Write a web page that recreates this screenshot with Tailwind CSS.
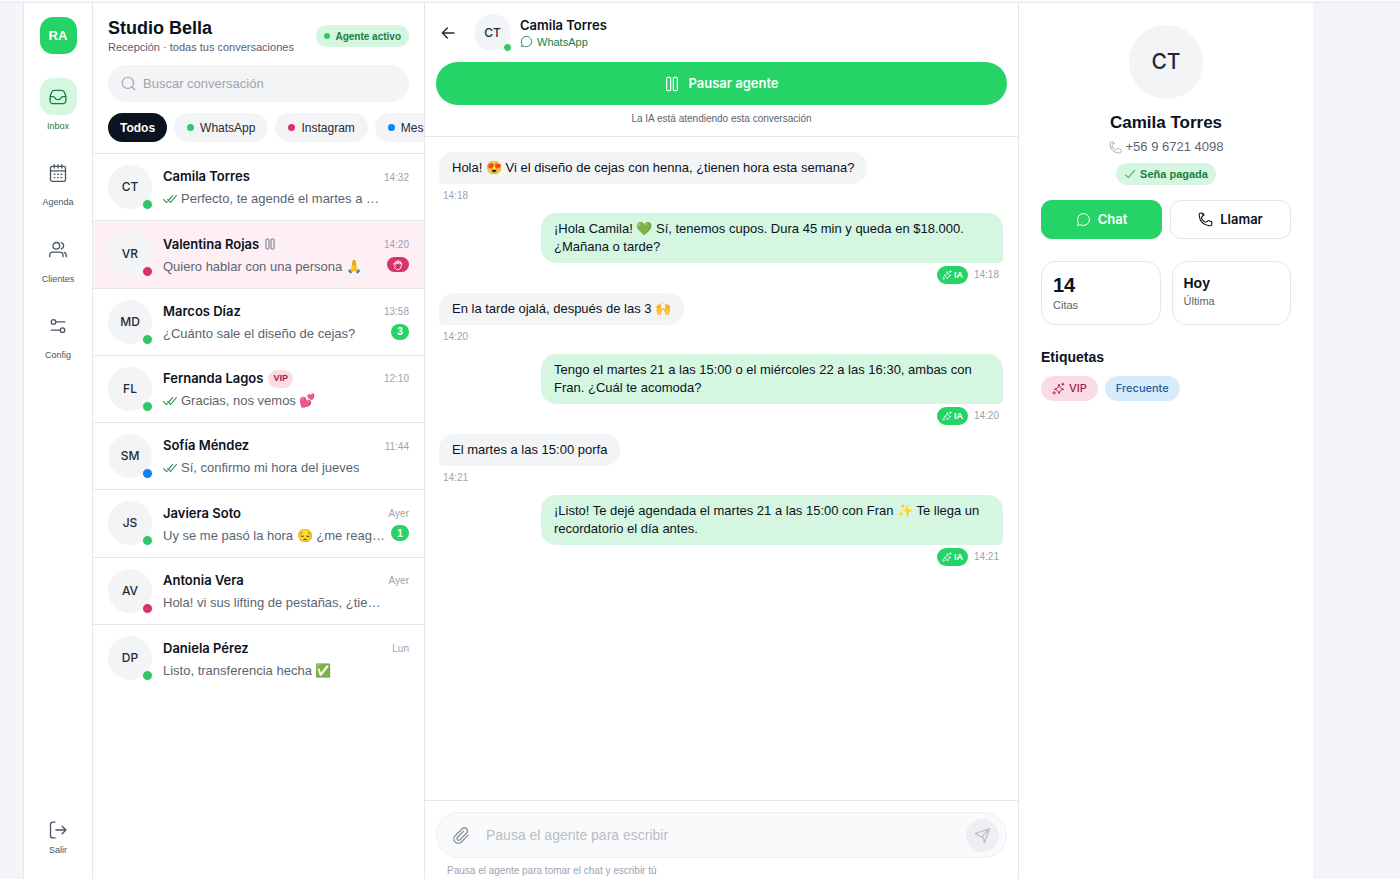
<!DOCTYPE html>
<html lang="es">
<head>
<meta charset="utf-8">
<meta name="viewport" content="width=device-width, initial-scale=1">
<title>Studio Bella · Recepción</title>
<script src="https://cdn.jsdelivr.net/npm/@tailwindcss/browser@4"></script>
</head>
<body class="flex h-screen flex-col overflow-hidden bg-[#f3f5f8] font-['Liberation_Sans',sans-serif] text-[13px] text-[#0b1220]">
<svg class="hidden" aria-hidden="true">
  <defs>
    <symbol id="i-dbl" viewBox="0 0 24 24"><path stroke-linecap="round" stroke-linejoin="round" d="M1 13 L6 18 L7.500 16.500 M16.500 6 L10.500 13 M8 13 L13 18 L23 6"/></symbol>
    <symbol id="i-chat" viewBox="0 0 24 24"><path stroke-linejoin="round" d="M12 21.500a9.500 9.500 0 1 0-8.600-5.450c.25.55.3 1 .2 1.500L2.600 21.400l4.300-.85c.45-.08.8 0 1.200.15 1.200.53 2.500.8 3.900.8Z"/></symbol>
    <symbol id="i-phone" viewBox="0 0 24 24"><path stroke-linejoin="round" d="M9.160 5.710 8.660 4.580C8.330 3.840 8.160 3.470 7.920 3.190 7.610 2.830 7.200 2.570 6.750 2.430 6.380 2.320 5.970 2.320 5.160 2.320 3.970 2.320 3.380 2.320 2.880 2.550 2.290 2.820 1.760 3.400 1.550 4.010 1.370 4.530 1.420 5.060 1.530 6.130 2.620 17.500 8.860 21.600 18 22.470c1.060.1 1.600.16 2.110-.02.62-.21 1.200-.74 1.470-1.330.23-.5.23-1.100.23-2.290 0-.8 0-1.210-.11-1.580-.14-.45-.4-.86-.76-1.170-.28-.24-.65-.41-1.390-.74l-1.130-.5c-.8-.36-1.200-.53-1.610-.57-.38-.04-.78.02-1.140.15-.39.15-.72.42-1.390.98-.66.550-.99.830-1.400.98-.36.130-.84.180-1.220.13-.43-.07-.76-.24-1.420-.6-2.050-1.100-3.180-2.230-4.280-4.280-.36-.66-.53-.99-.6-1.420-.05-.380 0-.860.13-1.220.15-.410.43-.740.98-1.400.56-.67.84-1 .98-1.390.13-.36.19-.760.15-1.140-.04-.4-.22-.8-.57-1.610Z" transform="translate(.4 -.5)"/></symbol>
    <symbol id="i-spark" viewBox="0 0 24 24"><path stroke-linecap="round" stroke-linejoin="round" d="m13 4.500 1.350 3.500c.6 1.600.9 2.400 1.450 2.950.55.550 1.350.85 2.950 1.450L21.500 13.300l-2.750 1c-1.600.6-2.400.9-2.950 1.450-.55.550-.85 1.350-1.450 2.950L13 21.500l-1.350-2.800c-.6-1.600-.9-2.400-1.450-2.950-.55-.550-1.350-.85-2.950-1.450L4.500 13.300l2.750-.9c1.600-.6 2.400-.9 2.950-1.450.55-.550.85-1.350 1.450-2.950ZM20 2v4M18 4h4"/><circle cx="4" cy="20" r="2"/></symbol>
    <symbol id="i-pause" viewBox="0 0 24 24"><rect x="4" y="2" width="6" height="20" rx="1.500"/><rect x="14" y="2" width="6" height="20" rx="1.500"/></symbol>
  </defs>
</svg>

<div class="h-[3px] shrink-0 border-b border-[#e2e6ee] bg-[#f9fafb]"></div>
<div class="mr-[87px] ml-[23px] flex min-h-0 flex-1 border-l border-[#e5e7eb] bg-white">

  <!-- Navigation rail -->
  <nav class="flex w-[69px] shrink-0 flex-col items-center border-r border-[#e5e7eb] pt-[14px] pb-[23px] text-[9px] leading-3 text-[#4b5563]">
    <div class="flex size-[37px] items-center justify-center rounded-[13px] bg-[#25d366] text-[13px] font-bold text-white">RA</div>
    <a href="#inbox" class="mt-6 flex flex-col items-center gap-[5px] text-[#15803d]">
      <span class="flex size-[37px] items-center justify-center rounded-[13px] bg-[#d5f7e1]">
        <svg class="size-5 fill-none stroke-current stroke-[1.600]" viewBox="0 0 24 24" stroke-linecap="round" stroke-linejoin="round"><path d="M2.500 12.500c0-1.500.2-2.100.7-3.300L4.500 6.100C5.300 4.400 6 4 8 4h8c2 0 2.700.4 3.500 2.100l1.300 3.100c.5 1.200.7 1.800.7 3.300v3c0 3.600-.9 4.500-4.500 4.500H7c-3.600 0-4.500-.9-4.500-4.500ZM2.500 11.500h3.800c1 0 1.500.5 1.900 1.400.7 1.600 2 2.300 3.800 2.300s3.100-.7 3.800-2.300c.4-.9.900-1.400 1.900-1.400h3.800"/></svg>
      </span>
      Inbox
    </a>
    <a href="#agenda" class="mt-[22px] flex flex-col items-center gap-[5px]">
      <span class="flex size-[37px] items-center justify-center">
        <svg class="size-5 fill-none stroke-current stroke-[1.600]" viewBox="0 0 24 24" stroke-linecap="round" stroke-linejoin="round"><rect x="3" y="4" width="18" height="18" rx="2"/><path d="M7.500 2v4M16.500 2v4M12 2v4M3 9.500h18M7.500 13.500h.8M11.600 13.500h.8M15.700 13.500h.8M7.500 17.500h.8M11.600 17.500h.8M15.700 17.500h.8"/></svg>
      </span>
      Agenda
    </a>
    <a href="#clientes" class="mt-[23px] flex flex-col items-center gap-[5px]">
      <span class="flex size-[37px] items-center justify-center">
        <svg class="size-5 fill-none stroke-current stroke-[1.600]" viewBox="0 0 24 24" stroke-linecap="round" stroke-linejoin="round"><circle cx="10" cy="7" r="4"/><path d="M2 20v-1.500c0-2.500 1.500-4 4-4h8c2.500 0 4 1.500 4 4V20M16 3.200a4 4 0 0 1 0 7.600M19.500 14.800c1.700.6 2.500 1.900 2.500 3.700V20"/></svg>
      </span>
      Clientes
    </a>
    <a href="#config" class="mt-[22px] flex flex-col items-center gap-[5px]">
      <span class="flex size-[37px] items-center justify-center">
        <svg class="size-[18px] fill-none stroke-current stroke-[1.800]" viewBox="0 0 24 24" stroke-linecap="round" stroke-linejoin="round"><circle cx="6" cy="6.500" r="3"/><circle cx="18" cy="17.500" r="3"/><path d="M9 6.500h12M15 17.500H3"/></svg>
      </span>
      Config
    </a>
    <button type="button" class="mt-auto flex flex-col items-center gap-1">
      <svg class="size-5 fill-none stroke-current stroke-[1.600]" viewBox="0 0 24 24" stroke-linecap="round" stroke-linejoin="round"><path d="M8.500 2.500H6c-2 0-3 1-3 3v13c0 2 1 3 3 3h2.500M9.500 12h12M17 7.500l4.500 4.500-4.500 4.500"/></svg>
      Salir
    </button>
  </nav>

  <!-- Conversation list -->
  <section class="flex w-[332px] shrink-0 flex-col overflow-hidden border-r border-[#e5e7eb]">
    <header class="border-b border-[#e5e7eb] pt-[14px] pb-[11px] pl-[15px]">
      <div class="flex items-center justify-between pr-[15px]">
        <div>
          <h1 class="text-[18px] leading-[22px] font-bold">Studio Bella</h1>
          <p class="text-[11px] leading-4 text-[#566072]">Recepción · todas tus conversaciones</p>
        </div>
        <span class="flex h-[22px] items-center gap-[5px] rounded-full bg-[#d5f7e1] px-2 text-[10px] font-semibold text-[#15803d]"><i class="size-[6px] rounded-full bg-[#2fc869]"></i>Agente activo</span>
      </div>
      <label class="mt-[10px] mr-[15px] flex h-[37px] items-center gap-[7px] rounded-full bg-[#f3f4f6] px-[13px] text-[#9ca3af]">
        <svg class="size-[15px] shrink-0 fill-none stroke-current stroke-[1.800]" viewBox="0 0 24 24" stroke-linecap="round"><circle cx="11" cy="11" r="9"/><path d="m17.500 17.500 4.500 4.500"/></svg>
        <input type="search" aria-label="Buscar conversación" placeholder="Buscar conversación" class="min-w-0 flex-1 bg-transparent outline-none placeholder:text-[#9ca3af]">
      </label>
      <div class="mt-[11px] flex gap-[7px] overflow-hidden text-[12px] text-[#1f2937]">
        <button type="button" class="h-[29px] shrink-0 rounded-full bg-[#0b1220] px-[12px] font-semibold text-white">Todos</button>
        <button type="button" class="flex h-[29px] shrink-0 items-center gap-[6px] rounded-full bg-[#f3f4f6] px-[13px]"><i class="size-[7px] rounded-full bg-[#2fc869]"></i>WhatsApp</button>
        <button type="button" class="flex h-[29px] shrink-0 items-center gap-[6px] rounded-full bg-[#f3f4f6] px-[13px]"><i class="size-[7px] rounded-full bg-[#d6336c]"></i>Instagram</button>
        <button type="button" class="flex h-[29px] shrink-0 items-center gap-[6px] rounded-full bg-[#f3f4f6] px-[13px]"><i class="size-[7px] rounded-full bg-[#1583ee]"></i>Messenger</button>
      </div>
    </header>

    <ul class="grid min-h-[538px] auto-rows-fr grid-cols-1 divide-y divide-[#e5e7eb]">
      <li class="flex items-center gap-[11px] px-[15px]">
        <span class="relative flex size-11 shrink-0 items-center justify-center rounded-full bg-[#f3f4f6] font-['Inter',sans-serif] text-[12px] font-medium text-[#1f2937]">CT<i class="absolute -right-px -bottom-px size-[11px] rounded-full border border-white bg-[#2fc869]"></i></span>
        <div class="min-w-0 flex-1 pt-[2px]">
          <div class="flex h-[22px] items-center justify-between"><h2 class="font-['Inter',sans-serif] font-semibold">Camila Torres</h2><time class="text-[10px] text-[#9ca3af]">14:32</time></div>
          <p class="flex h-[22px] items-center gap-1 text-[#5b6472]"><svg class="size-[14px] shrink-0 fill-none stroke-[#15803d] stroke-[1.800]"><use href="#i-dbl"/></svg><span class="truncate">Perfecto, te agendé el martes a …</span></p>
        </div>
      </li>
      <li class="flex items-center gap-[11px] bg-[#fdeff4] px-[15px]">
        <span class="relative flex size-11 shrink-0 items-center justify-center rounded-full bg-[#f3f4f6] font-['Inter',sans-serif] text-[12px] font-medium text-[#1f2937]">VR<i class="absolute -right-px -bottom-px size-[11px] rounded-full border border-white bg-[#d6336c]"></i></span>
        <div class="min-w-0 flex-1 pt-[2px]">
          <div class="flex h-[22px] items-center gap-[5px]"><h2 class="font-['Inter',sans-serif] font-semibold">Valentina Rojas</h2><svg class="size-3 fill-none stroke-[#4b5563] stroke-[1.600]"><use href="#i-pause"/></svg><time class="ml-auto text-[10px] text-[#9ca3af]">14:20</time></div>
          <p class="flex h-[22px] items-center justify-between text-[#5b6472]"><span class="truncate">Quiero hablar con una persona 🙏</span>
            <span class="mb-[3px] flex h-[15px] w-[22px] shrink-0 items-center justify-center rounded-full bg-[#d6336c]"><svg class="size-3 fill-none stroke-white stroke-[1.800]" viewBox="0 0 24 24" stroke-linecap="round" stroke-linejoin="round"><path d="M6 14 3.500 10.500c-1-1.600 1-2.800 2.200-1.500L7.500 11 6.800 6.500c-.2-1.900 2.200-2.200 2.600-.4l.8 3.400V4.500c0-1.900 2.600-1.900 2.700 0l.3 4.700 1-3.900c.5-1.800 2.900-1.300 2.600.6l-.5 4.600 1.200-2.200c1-1.600 3-.6 2.400 1.200l-2 6.500c-1 3.500-3 5.500-6.400 5.500-2.900 0-4.500-1.500-6-4Z"/></svg></span></p>
        </div>
      </li>
      <li class="flex items-center gap-[11px] px-[15px]">
        <span class="relative flex size-11 shrink-0 items-center justify-center rounded-full bg-[#f3f4f6] font-['Inter',sans-serif] text-[12px] font-medium text-[#1f2937]">MD<i class="absolute -right-px -bottom-px size-[11px] rounded-full border border-white bg-[#2fc869]"></i></span>
        <div class="min-w-0 flex-1 pt-[2px]">
          <div class="flex h-[22px] items-center justify-between"><h2 class="font-['Inter',sans-serif] font-semibold">Marcos Díaz</h2><time class="text-[10px] text-[#9ca3af]">13:58</time></div>
          <p class="flex h-[22px] items-center justify-between text-[#5b6472]"><span class="truncate">¿Cuánto sale el diseño de cejas?</span><b class="mb-[4px] flex h-4 w-[18px] shrink-0 items-center justify-center rounded-full bg-[#25d366] text-[10px] text-white">3</b></p>
        </div>
      </li>
      <li class="flex items-center gap-[11px] px-[15px]">
        <span class="relative flex size-11 shrink-0 items-center justify-center rounded-full bg-[#f3f4f6] font-['Inter',sans-serif] text-[12px] font-medium text-[#1f2937]">FL<i class="absolute -right-px -bottom-px size-[11px] rounded-full border border-white bg-[#2fc869]"></i></span>
        <div class="min-w-0 flex-1 pt-[2px]">
          <div class="flex h-[22px] items-center gap-[5px]"><h2 class="font-['Inter',sans-serif] font-semibold">Fernanda Lagos</h2><span class="flex h-[18px] items-center rounded-full bg-[#fadbe6] px-[5px] text-[9px] font-semibold text-[#a01d4d]">VIP</span><time class="ml-auto text-[10px] text-[#9ca3af]">12:10</time></div>
          <p class="flex h-[22px] items-center gap-1 text-[#5b6472]"><svg class="size-[14px] shrink-0 fill-none stroke-[#15803d] stroke-[1.800]"><use href="#i-dbl"/></svg><span class="truncate">Gracias, nos vemos 💕</span></p>
        </div>
      </li>
      <li class="flex items-center gap-[11px] px-[15px]">
        <span class="relative flex size-11 shrink-0 items-center justify-center rounded-full bg-[#f3f4f6] font-['Inter',sans-serif] text-[12px] font-medium text-[#1f2937]">SM<i class="absolute -right-px -bottom-px size-[11px] rounded-full border border-white bg-[#1583ee]"></i></span>
        <div class="min-w-0 flex-1 pt-[2px]">
          <div class="flex h-[22px] items-center justify-between"><h2 class="font-['Inter',sans-serif] font-semibold">Sofía Méndez</h2><time class="text-[10px] text-[#9ca3af]">11:44</time></div>
          <p class="flex h-[22px] items-center gap-1 text-[#5b6472]"><svg class="size-[14px] shrink-0 fill-none stroke-[#15803d] stroke-[1.800]"><use href="#i-dbl"/></svg><span class="truncate">Sí, confirmo mi hora del jueves</span></p>
        </div>
      </li>
      <li class="flex items-center gap-[11px] px-[15px]">
        <span class="relative flex size-11 shrink-0 items-center justify-center rounded-full bg-[#f3f4f6] font-['Inter',sans-serif] text-[12px] font-medium text-[#1f2937]">JS<i class="absolute -right-px -bottom-px size-[11px] rounded-full border border-white bg-[#2fc869]"></i></span>
        <div class="min-w-0 flex-1 pt-[2px]">
          <div class="flex h-[22px] items-center justify-between"><h2 class="font-['Inter',sans-serif] font-semibold">Javiera Soto</h2><time class="text-[10px] text-[#9ca3af]">Ayer</time></div>
          <p class="flex h-[22px] items-center justify-between gap-[2px] text-[#5b6472]"><span class="truncate">Uy se me pasó la hora 😔 ¿me reag…</span><b class="mb-[4px] flex h-4 w-[18px] shrink-0 items-center justify-center rounded-full bg-[#25d366] text-[10px] text-white">1</b></p>
        </div>
      </li>
      <li class="flex items-center gap-[11px] px-[15px]">
        <span class="relative flex size-11 shrink-0 items-center justify-center rounded-full bg-[#f3f4f6] font-['Inter',sans-serif] text-[12px] font-medium text-[#1f2937]">AV<i class="absolute -right-px -bottom-px size-[11px] rounded-full border border-white bg-[#d6336c]"></i></span>
        <div class="min-w-0 flex-1 pt-[2px]">
          <div class="flex h-[22px] items-center justify-between"><h2 class="font-['Inter',sans-serif] font-semibold">Antonia Vera</h2><time class="text-[10px] text-[#9ca3af]">Ayer</time></div>
          <p class="flex h-[22px] items-center text-[#5b6472]"><span class="truncate">Hola! vi sus lifting de pestañas, ¿tie…</span></p>
        </div>
      </li>
      <li class="flex items-center gap-[11px] px-[15px]">
        <span class="relative flex size-11 shrink-0 items-center justify-center rounded-full bg-[#f3f4f6] font-['Inter',sans-serif] text-[12px] font-medium text-[#1f2937]">DP<i class="absolute -right-px -bottom-px size-[11px] rounded-full border border-white bg-[#2fc869]"></i></span>
        <div class="min-w-0 flex-1 pt-[2px]">
          <div class="flex h-[22px] items-center justify-between"><h2 class="font-['Inter',sans-serif] font-semibold">Daniela Pérez</h2><time class="text-[10px] text-[#9ca3af]">Lun</time></div>
          <p class="flex h-[22px] items-center text-[#5b6472]"><span class="truncate">Listo, transferencia hecha ✅</span></p>
        </div>
      </li>
    </ul>
  </section>

  <!-- Chat -->
  <main class="flex min-w-0 flex-1 flex-col">
    <header class="border-b border-[#e5e7eb] px-[11px] pt-[11px] pb-[9px]">
      <div class="flex h-[37px] items-center">
        <button type="button" aria-label="Volver" class="mr-4 ml-[2px] flex size-5 items-center justify-center"><svg class="size-4 fill-none stroke-[#1f2937] stroke-2" viewBox="0 0 24 24" stroke-linecap="round" stroke-linejoin="round"><path d="M4 12h17M11 4.500 3.500 12l7.500 7.500"/></svg></button>
        <span class="relative flex size-[37px] items-center justify-center rounded-full bg-[#f3f4f6] font-['Inter',sans-serif] text-[12px] font-medium text-[#1f2937]">CT<i class="absolute -right-px -bottom-px size-[9px] rounded-full border border-white bg-[#2fc869]"></i></span>
        <div class="ml-[9px]">
          <h2 class="font-['Inter',sans-serif] leading-[18px] font-semibold">Camila Torres</h2>
          <p class="flex items-center gap-1 text-[11px] leading-4 text-[#15803d]"><svg class="size-[13px] fill-none stroke-current stroke-[1.600]"><use href="#i-chat"/></svg>WhatsApp</p>
        </div>
      </div>
      <button type="button" class="mt-[11px] flex h-[43px] w-full items-center justify-center gap-2 rounded-full bg-[#25d366] font-['Inter',sans-serif] font-semibold text-white"><svg class="size-4 fill-none stroke-current stroke-[1.800]"><use href="#i-pause"/></svg>Pausar agente</button>
      <p class="mt-[6px] text-center text-[10px] leading-4 text-[#5b6472]">La IA está atendiendo esta conversación</p>
    </header>

    <div class="flex min-h-0 flex-1 flex-col gap-[9px] overflow-hidden pt-[15px] pr-[15px] pl-[14px] leading-[18px]">
      <article class="flex flex-col items-start">
        <p class="rounded-[15px] rounded-bl-[5px] bg-[#f3f4f6] px-[13px] py-[7px]">Hola! 😍 Vi el diseño de cejas con henna, ¿tienen hora esta semana?</p>
        <time class="mt-1 ml-1 text-[10px] leading-4 text-[#9ca3af]">14:18</time>
      </article>
      <article class="flex w-[82%] max-w-[462px] flex-col items-end self-end">
        <p class="w-full rounded-[15px] rounded-br-[5px] bg-[#d5f7e1] px-[13px] py-[7px]">¡Hola Camila! 💚 Sí, tenemos cupos. Dura 45 min y queda en $18.000. ¿Mañana o tarde?</p>
        <div class="mt-[3px] mr-1 flex h-[18px] items-center gap-[6px] text-[10px] text-[#9ca3af]"><span class="flex h-[18px] items-center gap-[2px] rounded-full bg-[#25d366] px-[5px] text-[9px] font-bold text-white"><svg class="size-[10px] fill-none stroke-current stroke-2"><use href="#i-spark"/></svg>IA</span><time>14:18</time></div>
      </article>
      <article class="flex flex-col items-start">
        <p class="rounded-[15px] rounded-bl-[5px] bg-[#f3f4f6] px-[13px] py-[7px]">En la tarde ojalá, después de las 3 🙌</p>
        <time class="mt-1 ml-1 text-[10px] leading-4 text-[#9ca3af]">14:20</time>
      </article>
      <article class="flex w-[82%] max-w-[462px] flex-col items-end self-end">
        <p class="w-full rounded-[15px] rounded-br-[5px] bg-[#d5f7e1] px-[13px] py-[7px]">Tengo el martes 21 a las 15:00 o el miércoles 22 a las 16:30, ambas con Fran. ¿Cuál te acomoda?</p>
        <div class="mt-[3px] mr-1 flex h-[18px] items-center gap-[6px] text-[10px] text-[#9ca3af]"><span class="flex h-[18px] items-center gap-[2px] rounded-full bg-[#25d366] px-[5px] text-[9px] font-bold text-white"><svg class="size-[10px] fill-none stroke-current stroke-2"><use href="#i-spark"/></svg>IA</span><time>14:20</time></div>
      </article>
      <article class="flex flex-col items-start">
        <p class="rounded-[15px] rounded-bl-[5px] bg-[#f3f4f6] px-[13px] py-[7px]">El martes a las 15:00 porfa</p>
        <time class="mt-1 ml-1 text-[10px] leading-4 text-[#9ca3af]">14:21</time>
      </article>
      <article class="flex w-[82%] max-w-[462px] flex-col items-end self-end">
        <p class="w-full rounded-[15px] rounded-br-[5px] bg-[#d5f7e1] px-[13px] py-[7px]">¡Listo! Te dejé agendada el martes 21 a las 15:00 con Fran ✨ Te llega un recordatorio el día antes.</p>
        <div class="mt-[3px] mr-1 flex h-[18px] items-center gap-[6px] text-[10px] text-[#9ca3af]"><span class="flex h-[18px] items-center gap-[2px] rounded-full bg-[#25d366] px-[5px] text-[9px] font-bold text-white"><svg class="size-[10px] fill-none stroke-current stroke-2"><use href="#i-spark"/></svg>IA</span><time>14:21</time></div>
      </article>
    </div>

    <footer class="border-t border-[#e5e7eb] px-[11px] pt-[11px]">
      <div class="flex h-[46px] items-center rounded-full border border-[#eef0f3] bg-[#f9fafb] pr-[7px] pl-[15px]">
        <button type="button" aria-label="Adjuntar archivo"><svg class="size-[19px] fill-none stroke-[#8b929e] stroke-[1.700]" viewBox="0 0 24 24" stroke-linecap="round" stroke-linejoin="round"><path d="m20.500 11.500-8.700 8.700a5.500 5.500 0 0 1-7.800-7.800l9-9a3.900 3.900 0 0 1 5.500 5.500l-8.600 8.600a2.200 2.200 0 0 1-3.100-3.100l7.700-7.700"/></svg></button>
        <input type="text" disabled aria-label="Mensaje" placeholder="Pausa el agente para escribir" class="mx-[15px] min-w-0 flex-1 bg-transparent text-[14px] placeholder:text-[#b9bdc6]">
        <button type="button" aria-label="Enviar" class="flex size-[33px] items-center justify-center rounded-full bg-[#eeeff2]"><svg class="size-[17px] fill-none stroke-[#b9bdc6] stroke-[1.700]" viewBox="0 0 24 24" stroke-linecap="round" stroke-linejoin="round"><path d="M21.500 2.500 1.500 9.300l7.700 4 3.900 1.500L14.700 22.500ZM21.500 2.500 11.500 13.500"/></svg></button>
      </div>
      <p class="mt-[5px] ml-[11px] text-[10px] leading-4 text-[#9ca3af]">Pausa el agente para tomar el chat y escribir tú</p>
    </footer>
  </main>

  <!-- Client details -->
  <aside class="w-[295px] shrink-0 border-l border-[#e5e7eb] px-[22px] pt-[22px]">
    <div class="flex flex-col items-center">
      <span class="flex size-[74px] items-center justify-center rounded-full bg-[#f3f4f6] font-['Inter',sans-serif] text-[21px] font-medium text-[#1f2937]">CT</span>
      <h2 class="mt-3 text-[17px] leading-6 font-bold">Camila Torres</h2>
      <p class="mt-[2px] flex items-center gap-1 leading-5 text-[#5b6472]"><svg class="size-[13px] fill-none stroke-[#9ca3af] stroke-[1.700]"><use href="#i-phone"/></svg>+56 9 6721 4098</p>
      <span class="mt-[6px] flex h-[22px] items-center gap-1 rounded-full bg-[#d5f7e1] px-2 text-[11px] font-semibold text-[#15803d]"><svg class="size-3 fill-none stroke-current stroke-2" viewBox="0 0 24 24" stroke-linecap="round" stroke-linejoin="round"><path d="m3 14 5.500 5.500L21 5"/></svg>Seña pagada</span>
    </div>
    <div class="mt-[15px] grid grid-cols-2 gap-2 font-['Inter',sans-serif] font-semibold">
      <button type="button" class="flex h-[39px] items-center justify-center gap-[7px] rounded-[11px] bg-[#25d366] text-white"><svg class="size-[15px] fill-none stroke-current stroke-[1.600]"><use href="#i-chat"/></svg>Chat</button>
      <button type="button" class="flex h-[39px] items-center justify-center gap-[7px] rounded-[11px] border border-[#e5e7eb]"><svg class="size-[15px] fill-none stroke-current stroke-[1.800]"><use href="#i-phone"/></svg>Llamar</button>
    </div>
    <dl class="mt-[22px] grid grid-cols-2 gap-[11px]">
      <div class="flex h-16 flex-col rounded-[15px] border border-[#e5e7eb] p-[11px]"><dd class="text-[20px] leading-6 font-bold">14</dd><dt class="text-[11px] leading-4 text-[#5b6472]">Citas</dt></div>
      <div class="flex h-16 flex-col rounded-[15px] border border-[#e5e7eb] p-[11px]"><dd class="text-[14px] leading-5 font-bold">Hoy</dd><dt class="text-[11px] leading-4 text-[#5b6472]">Última</dt></div>
    </dl>
    <h3 class="mt-[22px] text-[14px] leading-5 font-bold">Etiquetas</h3>
    <div class="mt-[9px] flex gap-[7px] font-['Inter',sans-serif] text-[11px] font-medium">
      <span class="flex h-[25px] items-center gap-1 rounded-full bg-[#fadbe6] px-[11px] text-[#a01d4d]"><svg class="size-[13px] fill-none stroke-current stroke-[1.800]"><use href="#i-spark"/></svg>VIP</span>
      <span class="flex h-[25px] items-center rounded-full bg-[#d6ebfc] px-[11px] text-[#1a5fa3]">Frecuente</span>
    </div>
  </aside>
</div>
</body>
</html>
